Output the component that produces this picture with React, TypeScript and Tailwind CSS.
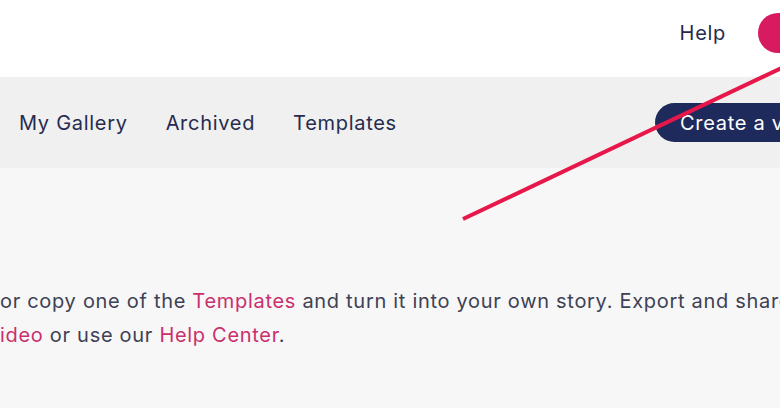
export default function App() {
  return (
    <div
      className="relative h-[408px] w-[780px] overflow-hidden bg-[#f7f7f8] tracking-[0.7px] text-[#262b4f]"
      style={{ fontFamily: "Inter, 'Noto Sans', sans-serif" }}
    >
      {/* top header */}
      <header className="flex h-[77px] items-start justify-end bg-white pt-[13px]">
        <a className="mr-[32px] text-[20px] leading-[40px]">Help</a>
        <div className="mr-[-18px] h-[40px] w-[40px] rounded-full bg-[#d81b60]" />
      </header>

      {/* gallery nav */}
      <nav className="flex h-[91px] items-center bg-[#f0f0f0] pl-[19px]">
        <div className="flex gap-[38px] text-[20px]">
          <a>My Gallery</a>
          <a>Archived</a>
          <a>Templates</a>
        </div>
        <button className="ml-auto mr-[-65px] h-[39px] w-[190px] shrink-0 whitespace-nowrap rounded-full bg-[#1f2a5c] pl-[25px] text-left text-[20px] text-white">
          Create a video
        </button>
      </nav>

      {/* intro copy */}
      <div className="pt-[116px] text-[20px] leading-[34px] text-[#3e4154]">
        <p className="whitespace-nowrap">
          or copy one of the <span className="text-[#c9306c]">Templates</span> and turn it into your own story.
          Export and share it anywhere.
        </p>
        <p className="whitespace-nowrap">
          <span className="text-[#c9306c]">ideo</span> or use our{" "}
          <span className="text-[#c9306c]">Help Center</span>.
        </p>
      </div>

      {/* annotation arrow */}
      <svg className="pointer-events-none absolute inset-0" width="780" height="408">
        <line x1="463" y1="219" x2="790" y2="64" stroke="#e8174a" strokeWidth="4" />
      </svg>
    </div>
  );
}
